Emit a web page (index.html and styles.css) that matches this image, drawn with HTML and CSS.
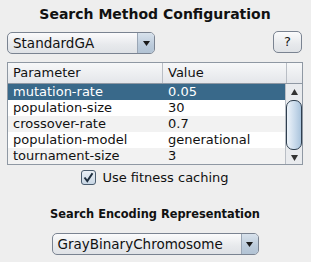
FILE: index.html
```html
<!DOCTYPE html>
<html>
<head>
<meta charset="utf-8">
<link rel="stylesheet" href="styles.css">
</head>
<body>
<div class="panel">
  <div class="title">Search Method Configuration</div>
  <div class="toprow">
    <div class="combo combo-method">
      <span class="combo-text">StandardGA</span>
      <span class="combo-arrow"><svg width="7" height="5" viewBox="0 0 7 5"><path d="M0 0H7L3.5 5Z" fill="#1a1a1a"/></svg></span>
    </div>
    <div class="help">?</div>
  </div>
  <div class="table">
    <div class="thead">
      <div class="th th-param">Parameter</div>
      <div class="th th-value">Value</div>
      <div class="th th-corner"></div>
    </div>
    <div class="tbody">
      <div class="rows">
        <div class="row sel"><span class="c1">mutation-rate</span><span class="c2">0.05</span></div>
        <div class="row"><span class="c1">population-size</span><span class="c2">30</span></div>
        <div class="row alt"><span class="c1">crossover-rate</span><span class="c2">0.7</span></div>
        <div class="row"><span class="c1">population-model</span><span class="c2">generational</span></div>
        <div class="row alt"><span class="c1">tournament-size</span><span class="c2">3</span></div>
      </div>
      <div class="scrollbar">
        <div class="sb-btn"><svg width="7" height="6" viewBox="0 0 7 6"><path d="M3.5 0L7 6H0Z" fill="#333"/></svg></div>
        <div class="sb-track"><div class="sb-thumb"></div></div>
        <div class="sb-btn"><svg width="7" height="6" viewBox="0 0 7 6"><path d="M0 0H7L3.5 6Z" fill="#333"/></svg></div>
      </div>
    </div>
  </div>
  <div class="checkrow">
    <span class="checkbox"><svg width="11" height="11" viewBox="0 0 11 11"><path d="M1.5 5.5L4.3 9L9.5 1.2" fill="none" stroke="#1f2f3f" stroke-width="2"/></svg></span>
    <span class="checklabel">Use fitness caching</span>
  </div>
  <div class="subtitle">Search Encoding Representation</div>
  <div class="bottomrow">
    <div class="combo combo-enc">
      <span class="combo-text">GrayBinaryChromosome</span>
      <span class="combo-arrow"><svg width="7" height="5" viewBox="0 0 7 5"><path d="M0 0H7L3.5 5Z" fill="#1a1a1a"/></svg></span>
    </div>
  </div>
</div>
</body>
</html>
```
FILE: styles.css
```css
html, body {
  margin: 0;
  padding: 0;
  background: #eeeeee;
  font-family: "DejaVu Sans", sans-serif;
  color: #000;
}
.panel {
  width: 311px;
  height: 262px;
  display: flex;
  flex-direction: column;
  box-sizing: border-box;
  padding: 0 8px 0 7px;
}
.title {
  font-weight: bold;
  font-size: 14px;
  text-align: center;
  height: 32px;
  box-sizing: border-box;
  padding-top: 2px;
  line-height: 24px;
  color: #111;
}
.toprow {
  display: flex;
  justify-content: space-between;
  align-items: flex-start;
  height: 30px;
}
.combo {
  display: flex;
  height: 22px;
  box-sizing: border-box;
  border: 1px solid #7a8391;
  border-radius: 5px;
  background: linear-gradient(#fbfbfc, #e7e9ec 60%, #dfe2e6);
  overflow: hidden;
}
.combo-method { width: 148px; }
.combo-text {
  flex: 1;
  font-size: 13.5px;
  line-height: 20px;
  padding-left: 5px;
  color: #111;
}
.combo-arrow {
  width: 16px;
  border-left: 1px solid #9aa6b5;
  background: linear-gradient(#d8e2ec, #bccbdb 60%, #b2c3d4);
  display: flex;
  align-items: center;
  justify-content: center;
}
.help {
  width: 29px;
  height: 22px;
  box-sizing: border-box;
  margin-top: -1px;
  margin-right: 1px;
  border: 1px solid #7a8391;
  border-radius: 5px;
  background: linear-gradient(#fbfbfc, #e7e9ec 60%, #dfe2e6);
  font-size: 13px;
  line-height: 20px;
  text-align: center;
  color: #111;
}
.table {
  width: 296px;
  height: 103px;
  box-sizing: border-box;
  border: 1px solid #8f98a3;
  background: #fff;
  display: flex;
  flex-direction: column;
  overflow: hidden;
}
.thead {
  display: flex;
  height: 21px;
  flex: none;
  background: linear-gradient(#f7f8f9, #e4e6ea);
  border-bottom: 1px solid #8f98a3;
  box-sizing: border-box;
}
.th {
  font-size: 13px;
  line-height: 20px;
  padding-left: 5px;
  box-sizing: border-box;
  border-right: 1px solid #b9bec5;
  color: #111;
}
.th-param { width: 155px; }
.th-value { width: 124px; }
.th-corner { flex: 1; border-right: none; padding: 0; }
.tbody {
  display: flex;
  flex: 1;
  overflow: hidden;
}
.rows {
  flex: 1;
  display: flex;
  flex-direction: column;
}
.row {
  display: flex;
  height: 16px;
  flex: none;
  font-size: 13px;
  line-height: 16px;
  background: #fff;
  color: #111;
}
.row.alt { background: #f2f2f2; }
.row.sel { background: #39698a; color: #fff; }
.c1 { width: 155px; padding-left: 5px; box-sizing: border-box; }
.c2 { padding-left: 5px; }
.scrollbar {
  width: 16px;
  flex: none;
  display: flex;
  flex-direction: column;
  background: #e9ebee;
  border-left: 1px solid #b9bec5;
}
.sb-btn {
  height: 15px;
  flex: none;
  display: flex;
  align-items: center;
  justify-content: center;
}
.sb-track {
  flex: 1;
  display: flex;
  flex-direction: column;
}
.sb-thumb {
  height: 50px;
  margin-top: 1px;
  box-sizing: border-box;
  border: 1px solid #2f3f4f;
  border-radius: 7px;
  background: linear-gradient(90deg, #eef4fa, #c6d8ea 60%, #aac4dc);
}
.checkrow {
  display: flex;
  justify-content: center;
  align-items: center;
  height: 24px;
  margin-top: 0;
  gap: 6px;
}
.checkbox {
  width: 15px;
  height: 15px;
  box-sizing: border-box;
  border: 1px solid #4a5c6e;
  border-radius: 3px;
  background: linear-gradient(#eaf0f6, #c8d6e4);
  display: flex;
  align-items: center;
  justify-content: center;
}
.checklabel {
  font-size: 13px;
  color: #111;
}
.subtitle {
  font-weight: bold;
  font-size: 11.4px;
  text-align: center;
  margin-top: 15px;
  height: 20px;
  line-height: 20px;
  color: #111;
}
.bottomrow {
  display: flex;
  justify-content: center;
  margin-top: 9px;
}
.combo-enc { width: 207px; }
```
